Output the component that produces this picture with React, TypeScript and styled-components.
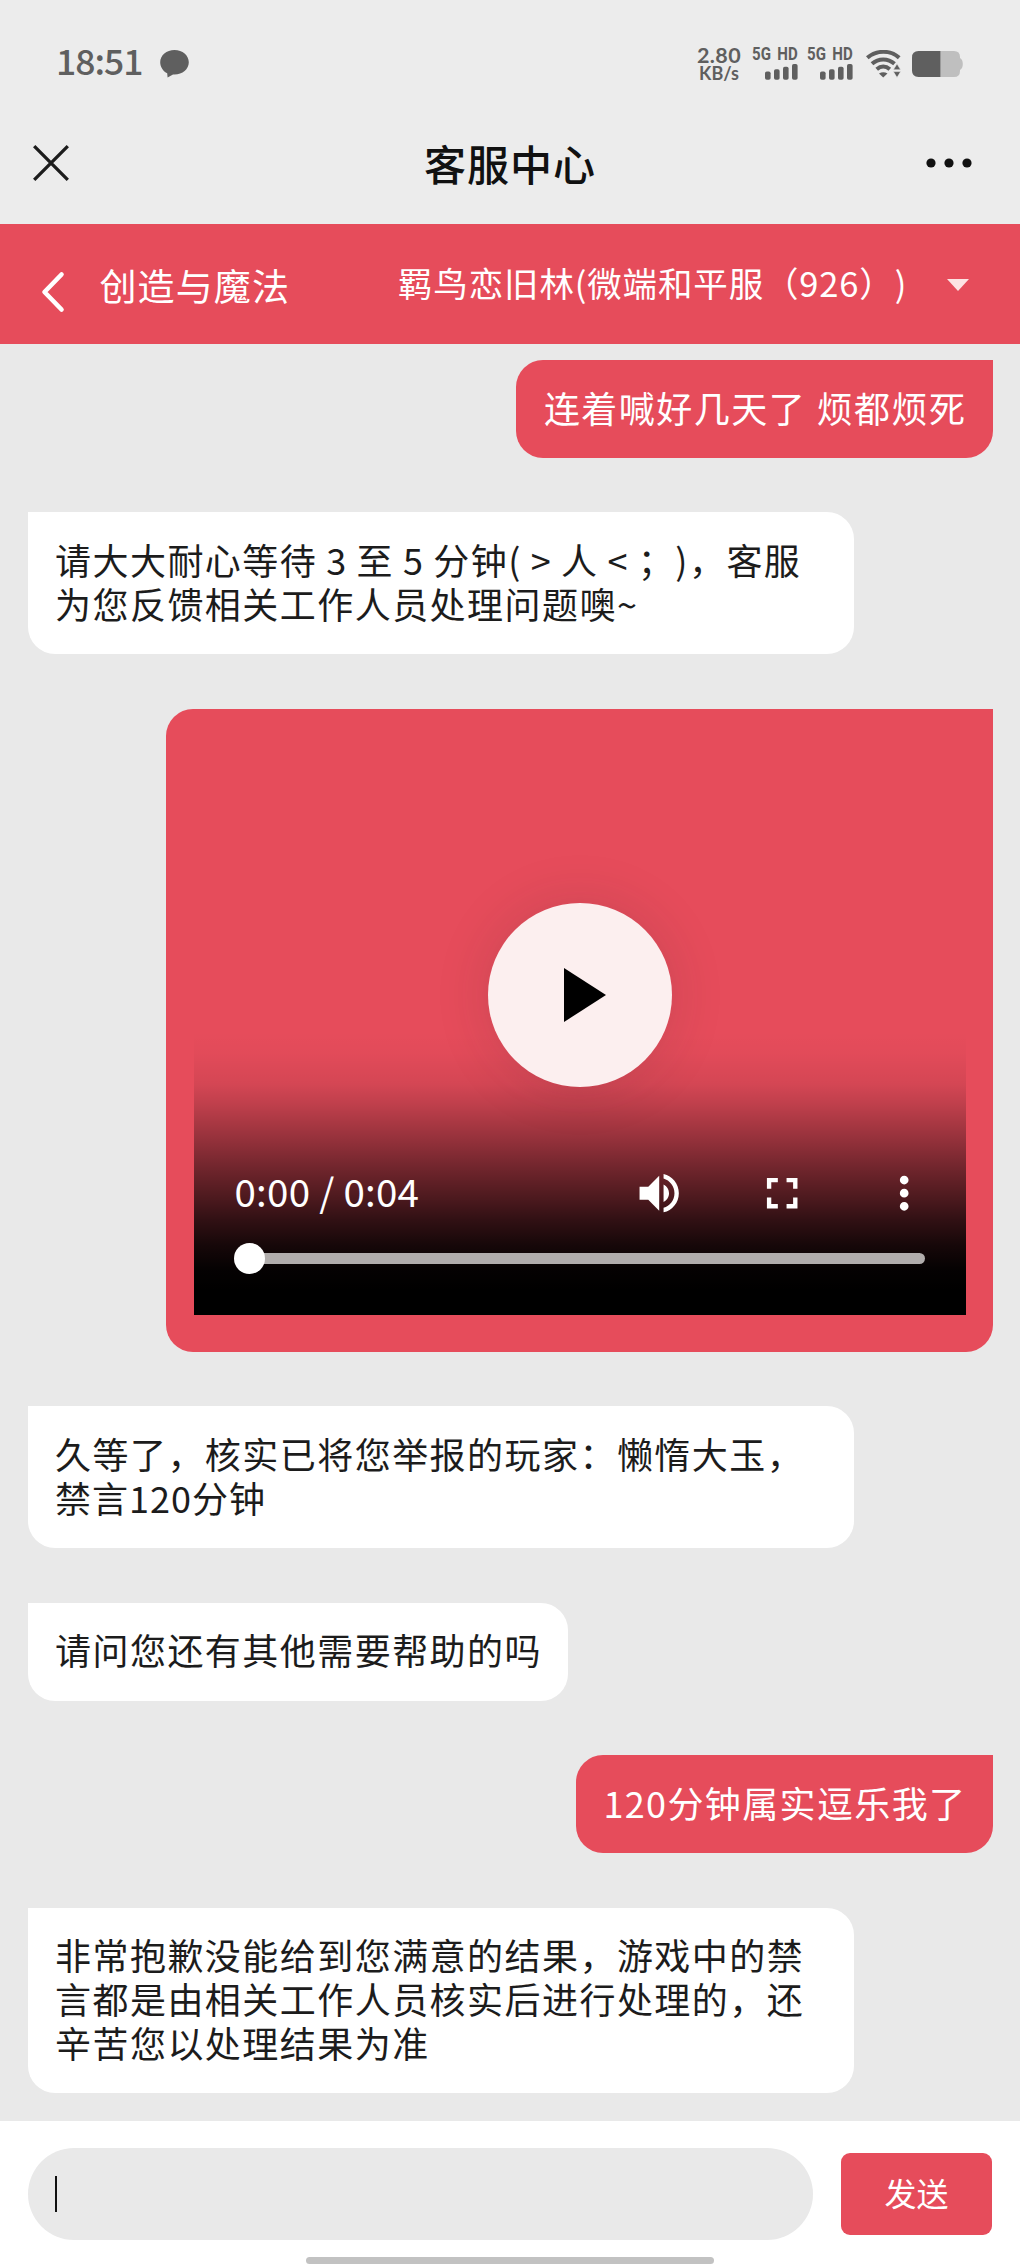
import React from "react";
import styled, { createGlobalStyle } from "styled-components";

const RED = "#e64c5b";
const STATUS = "#5f5f5f";

const GlobalStyle = createGlobalStyle`
  * { box-sizing: border-box; }
  body {
    margin: 0;
    background: #e9e9e9;
    font-family: "Noto Sans CJK SC", "Noto Sans", sans-serif;
    text-spacing-trim: space-all;
  }
  svg { display: block; flex: none; }
`;

const Screen = styled.div`
  display: flex;
  flex-direction: column;
  width: 1020px;
  height: 2267px;
  overflow: hidden;
  background: #e9e9e9;
`;

const TopArea = styled.header`
  display: flex;
  flex-direction: column;
  height: 224px;
  flex: none;
  background: #ececec;
`;

const StatusBar = styled.div`
  display: flex;
  align-items: center;
  height: 128px;
  padding: 0 57px 0 56px;
  color: ${STATUS};
`;

const Clock = styled.span`
  width: 103.5px;
  margin: -8px 0 0;
  font-size: 35.5px;
  line-height: 40px;
  font-weight: 500;
  letter-spacing: -1px;
`;

const StatusIcons = styled.div`
  display: flex;
  align-items: center;
  margin-left: auto;
`;

const Speed = styled.div`
  display: flex;
  flex-direction: column;
  align-items: center;
  width: 46px;
  margin-right: 10px;
  font-family: Lato, sans-serif;
  font-weight: 700;
`;

const SpeedValue = styled.span`
  font-size: 21.5px;
  line-height: 18px;
  letter-spacing: 0.4px;
`;

const SpeedUnit = styled.span`
  font-size: 18px;
  line-height: 19px;
`;

const Signal = styled.div`
  display: flex;
  flex-direction: column;
  align-items: flex-end;
  gap: 3px;
  width: 46px;
  margin-right: 9px;
`;

const SignalLabel = styled.div`
  display: flex;
  justify-content: space-between;
  width: 46px;
  font-family: Roboto, sans-serif;
  font-size: 17.5px;
  line-height: 13px;
  font-weight: 700;
`;

const LabelPart = styled.span<{ $origin: string }>`
  transform: scaleX(0.86);
  transform-origin: ${(p) => p.$origin} center;
`;

const WifiSlot = styled.div`
  margin: 0 11px 0 4px;
`;

const TitleBar = styled.div`
  display: grid;
  grid-template-columns: 1fr auto 1fr;
  align-items: center;
  height: 70px;
  padding: 0 33px;
`;

const PageTitle = styled.h1`
  margin: -1px 0 0;
  font-size: 42px;
  line-height: 60px;
  font-weight: 500;
  letter-spacing: 1px;
  color: #111;
`;

const TitleRight = styled.div`
  display: flex;
  justify-content: flex-end;
  padding-right: 15px;
`;

const GameBar = styled.nav`
  display: flex;
  align-items: center;
  height: 120px;
  flex: none;
  padding: 0 51px 0 41px;
  background: ${RED};
  color: #fff;
`;

const BackArrow = styled.svg`
  margin-top: 15px;
`;

const GameName = styled.span`
  margin: 1px 0 0 34.5px;
  font-size: 37px;
  line-height: 54px;
  letter-spacing: 1.1px;
`;

const RolePicker = styled.div`
  display: flex;
  align-items: center;
  justify-content: space-between;
  width: 571px;
  height: 54px;
  margin: 0 0 4px auto;
  font-size: 34.5px;
  line-height: 54px;
  letter-spacing: 0.85px;
  white-space: nowrap;
`;

const Triangle = styled.svg`
  margin-top: 5px;
`;

const Chat = styled.main`
  display: flex;
  flex-direction: column;
  gap: 54.5px;
  height: 1777px;
  flex: none;
  padding: 16px 27.5px 0;
`;

const Bubble = styled.div<{ $mine?: boolean; $wide?: boolean }>`
  display: flex;
  flex-direction: column;
  align-self: ${(p) => (p.$mine ? "flex-end" : "flex-start")};
  width: ${(p) => (p.$wide ? "826.5px" : "auto")};
  padding: 25.6px 26px 28.6px 27.5px;
  border-radius: ${(p) => (p.$mine ? "27px 0 27px 27px" : "0 27px 27px 27px")};
  background: ${(p) => (p.$mine ? RED : "#fff")};
  color: ${(p) => (p.$mine ? "#fff" : "#1c1c1c")};
`;

const Line = styled.span<{ $tracking?: number; $wordGap?: number }>`
  font-size: 36px;
  line-height: 43.8px;
  letter-spacing: ${(p) => p.$tracking ?? 1.46}px;
  word-spacing: ${(p) => p.$wordGap ?? 1}px;
  white-space: pre;
`;

const VideoBubble = styled.div`
  align-self: flex-end;
  width: 826.5px;
  height: 643px;
  flex: none;
  padding: 27px 27px 36.5px 27.5px;
  border-radius: 27px 0 27px 27px;
  background: ${RED};
`;

const Video = styled.div`
  position: relative;
  display: flex;
  flex-direction: column;
  justify-content: flex-end;
  height: 100%;
  padding: 0 41px 41px;
  background: linear-gradient(
    to bottom,
    rgba(0, 0, 0, 0) 296px,
    rgba(0, 0, 0, 0.02) 318px,
    rgba(0, 0, 0, 0.08) 348px,
    rgba(0, 0, 0, 0.17) 368px,
    rgba(0, 0, 0, 0.34) 401px,
    rgba(0, 0, 0, 0.52) 434px,
    rgba(0, 0, 0, 0.68) 464px,
    rgba(0, 0, 0, 0.79) 484px,
    rgba(0, 0, 0, 0.9) 509px,
    rgba(0, 0, 0, 0.98) 534px,
    #000 554px
  );
`;

const PlayButton = styled.button`
  position: absolute;
  top: 167px;
  left: 294.5px;
  display: flex;
  align-items: center;
  justify-content: center;
  width: 184px;
  height: 184px;
  padding: 0 0 0 10px;
  border: 0;
  border-radius: 50%;
  background: #fcefef;
  box-shadow: 0 0 54px rgba(50, 40, 50, 0.15);
`;

const Controls = styled.div`
  display: flex;
  align-items: center;
  gap: 70px;
  height: 60px;
  margin-right: -6px;
  color: #fff;
`;

const Time = styled.span`
  margin: -5px auto 0 0;
  font-size: 38.5px;
  line-height: 56px;
  letter-spacing: 0.25px;
  white-space: pre;
`;

const Seek = styled.div`
  display: flex;
  align-items: center;
  height: 31px;
  margin: 20.5px 0 0 -0.5px;
`;

const Knob = styled.span`
  width: 31px;
  height: 31px;
  border-radius: 50%;
  background: #fff;
  z-index: 1;
`;

const Track = styled.span`
  flex: 1;
  height: 11px;
  margin-left: -4px;
  border-radius: 0 6px 6px 0;
  background: #b1adac;
`;

const Footer = styled.footer`
  display: flex;
  flex-direction: column;
  flex: 1;
  padding: 27px 28px 0 27.5px;
  background: #fff;
`;

const Composer = styled.div`
  display: flex;
  align-items: center;
  justify-content: space-between;
`;

const Field = styled.div`
  display: flex;
  align-items: center;
  width: 785.5px;
  height: 92px;
  padding-left: 27px;
  border-radius: 46px;
  background: #e9e9e9;
`;

const Caret = styled.span`
  width: 2.5px;
  height: 36px;
  background: #111;
`;

const SendButton = styled.button`
  width: 151px;
  height: 82px;
  padding: 0 0 4px;
  border: 0;
  border-radius: 9px;
  background: ${RED};
  color: #fff;
  font-family: inherit;
  font-size: 32px;
  line-height: 48px;
`;

const HomeBar = styled.div`
  width: 408px;
  height: 7px;
  margin: 17px auto 0;
  border-radius: 4px;
  background: #c2c2c2;
`;

const ChatDot = () => (
  <svg width="29" height="28" viewBox="0 0 29 28" fill={STATUS}>
    <path d="M14.500 0C6.500 0 .2 5.300.2 12.300c0 4.900 3 9 7 11l.4 4.300 5.400-3.100h1.500c8 0 14.300-5.200 14.300-12.200S22.500 0 14.500 0z" />
  </svg>
);

const SignalBars = () => (
  <svg width="33" height="16" viewBox="0 0 33 16" fill={STATUS}>
    <rect x="0" y="7.500" width="5.600" height="8.200" rx="1.800" />
    <rect x="9" y="5.200" width="5.600" height="10.500" rx="1.800" />
    <rect x="18" y="2.800" width="5.600" height="12.900" rx="1.800" />
    <rect x="27" y="0" width="5.600" height="15.700" rx="1.800" />
  </svg>
);

const Wifi = () => (
  <svg width="35" height="28" viewBox="0 0 35 28">
    <g fill="none" stroke={STATUS} strokeWidth="4">
      <path d="M1.300 7.800C10.500-.2 24.500-.2 33.200 7.800" />
      <path d="M6 13.800C12.500 8 22 8 28.500 13.800" />
      <path d="M10.700 19.300C14.800 15.700 19.700 15.700 23.800 19.300" />
    </g>
    <path d="M13 23.500Q17.200 20.800 21.500 23.500L17.200 27.600z" fill={STATUS} />
    <path d="M31 13.800l3.700 6h-7.400zM31 27.600l-3.700-6h7.400z" fill={STATUS} stroke="#ececec" strokeWidth="0.600" />
  </svg>
);

const Battery = () => (
  <svg width="51" height="26" viewBox="0 0 51 26">
    <path d="M28.500 0H42q6 0 6 6v1q2.800 1.500 2.800 6T48 19v1q0 6-6 6H28.500z" fill="#bfbfbf" />
    <path d="M6.500 0h22v26h-22Q0 26 0 19.500v-13Q0 0 6.500 0z" fill={STATUS} />
  </svg>
);

const CloseIcon = () => (
  <svg width="36" height="36" viewBox="0 0 36 36" stroke="#1c1c1c" strokeWidth="3.300">
    <path d="M1.200 1.200l33.600 33.600M34.800 1.200L1.200 34.800" />
  </svg>
);

const MoreDots = () => (
  <svg width="46" height="10" viewBox="0 0 46 10" fill="#111">
    <circle cx="5" cy="5" r="4.600" />
    <circle cx="23" cy="5" r="4.600" />
    <circle cx="41" cy="5" r="4.600" />
  </svg>
);

const BackIcon = () => (
  <BackArrow width="24" height="42" viewBox="0 0 24 42" fill="none" stroke="#fff" strokeWidth="4.600" strokeLinecap="round" strokeLinejoin="round">
    <path d="M20.500 3.500L3.500 21 20.500 38.500" />
  </BackArrow>
);

const ControlIcon = ({ d }: { d: string }) => (
  <svg width="52.400" height="52.400" viewBox="0 0 24 24" fill="#fff">
    <path d={d} />
  </svg>
);

const VOLUME =
  "M3 9v6h4l5 5V4L7 9H3zm13.500 3c0-1.770-1.020-3.290-2.500-4.030v8.050c1.480-.73 2.500-2.250 2.500-4.020zM14 3.230v2.060c2.890.86 5 3.540 5 6.710s-2.110 5.850-5 6.710v2.060c4.010-.91 7-4.490 7-8.770s-2.990-7.860-7-8.770z";
const FULLSCREEN =
  "M7 14H5v5h5v-2H7v-3zm-2-4h2V7h3V5H5v5zm12 7h-3v2h5v-5h-2v3zM14 5v2h3v3h2V5h-5z";
const MORE =
  "M12 8c1.100 0 2-.9 2-2s-.9-2-2-2-2 .9-2 2 .9 2 2 2zm0 2c-1.100 0-2 .9-2 2s.9 2 2 2 2-.9 2-2-.9-2-2-2zm0 6c-1.100 0-2 .9-2 2s.9 2 2 2 2-.9 2-2-.9-2-2-2z";

const SimSignal = () => (
  <Signal>
    <SignalLabel>
      <LabelPart $origin="left">5G</LabelPart>
      <LabelPart $origin="right">HD</LabelPart>
    </SignalLabel>
    <SignalBars />
  </Signal>
);

export default function App() {
  return (
    <Screen>
      <GlobalStyle />
      <TopArea>
        <StatusBar>
          <Clock>18:51</Clock>
          <ChatDot />
          <StatusIcons>
            <Speed>
              <SpeedValue>2.80</SpeedValue>
              <SpeedUnit>KB/s</SpeedUnit>
            </Speed>
            <SimSignal />
            <SimSignal />
            <WifiSlot>
              <Wifi />
            </WifiSlot>
            <Battery />
          </StatusIcons>
        </StatusBar>
        <TitleBar>
          <CloseIcon />
          <PageTitle>客服中心</PageTitle>
          <TitleRight>
            <MoreDots />
          </TitleRight>
        </TitleBar>
      </TopArea>

      <GameBar>
        <BackIcon />
        <GameName>创造与魔法</GameName>
        <RolePicker>
          <span>羁鸟恋旧林(微端和平服（926）)</span>
          <Triangle width="22" height="12" viewBox="0 0 22 12">
            <path d="M0 0h22L11 12z" fill="#fde3e3" />
          </Triangle>
        </RolePicker>
      </GameBar>

      <Chat>
        <Bubble $mine>
          <Line>连着喊好几天了 烦都烦死</Line>
        </Bubble>
        <Bubble $wide>
          <Line $wordGap={-0.6}>{"请大大耐心等待 3 至 5 分钟( > 人 < ；)，客服"}</Line>
          <Line>为您反馈相关工作人员处理问题噢~</Line>
        </Bubble>
        <VideoBubble>
          <Video>
            <PlayButton aria-label="播放">
              <svg width="42" height="54" viewBox="0 0 42 54">
                <path d="M0 0l42 27L0 54z" />
              </svg>
            </PlayButton>
            <Controls>
              <Time>0:00 / 0:04</Time>
              <ControlIcon d={VOLUME} />
              <ControlIcon d={FULLSCREEN} />
              <ControlIcon d={MORE} />
            </Controls>
            <Seek>
              <Knob />
              <Track />
            </Seek>
          </Video>
        </VideoBubble>
        <Bubble $wide>
          <Line>久等了，核实已将您举报的玩家：懒惰大玉，</Line>
          <Line $tracking={1}>禁言120分钟</Line>
        </Bubble>
        <Bubble>
          <Line>请问您还有其他需要帮助的吗</Line>
        </Bubble>
        <Bubble $mine>
          <Line $tracking={1.38}>120分钟属实逗乐我了</Line>
        </Bubble>
        <Bubble $wide>
          <Line>非常抱歉没能给到您满意的结果，游戏中的禁</Line>
          <Line>言都是由相关工作人员核实后进行处理的，还</Line>
          <Line>辛苦您以处理结果为准</Line>
        </Bubble>
      </Chat>

      <Footer>
        <Composer>
          <Field>
            <Caret />
          </Field>
          <SendButton>发送</SendButton>
        </Composer>
        <HomeBar />
      </Footer>
    </Screen>
  );
}
